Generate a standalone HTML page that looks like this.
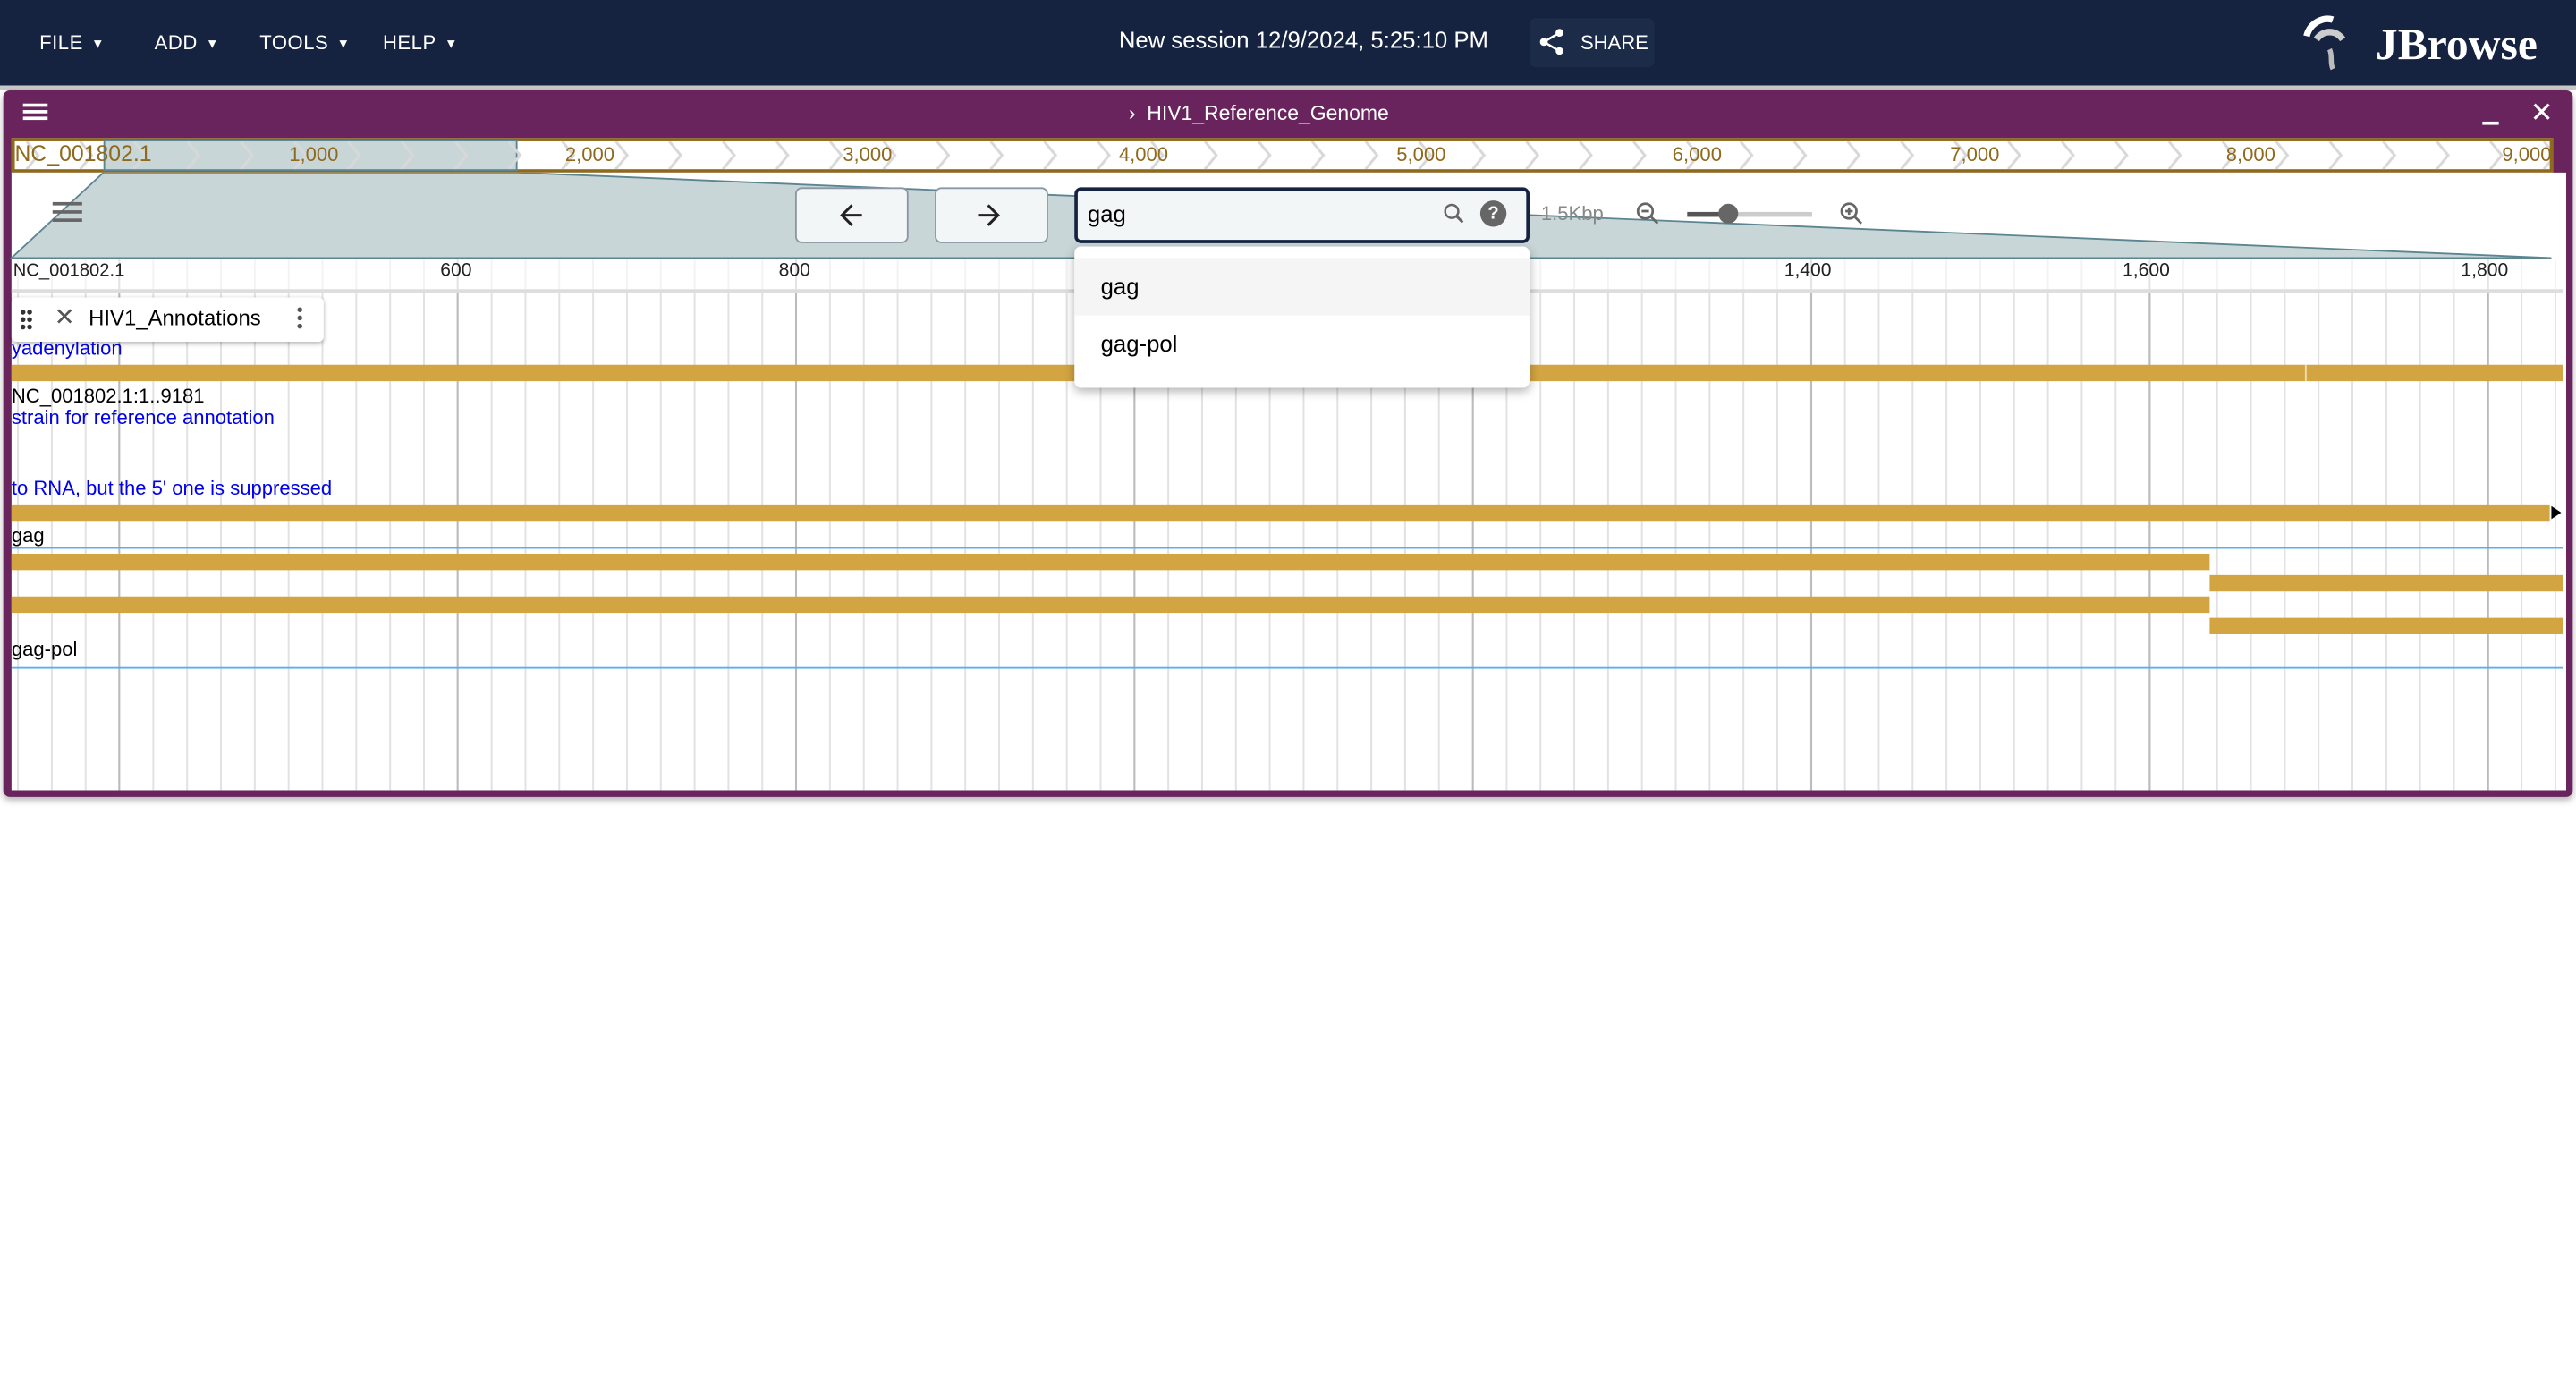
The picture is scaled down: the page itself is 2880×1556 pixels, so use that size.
<!DOCTYPE html>
<html><head><meta charset="utf-8"><style>
*{margin:0;padding:0;box-sizing:border-box}
html,body{width:2880px;height:1556px;overflow:hidden;background:#fff}
#w{position:absolute;left:0;top:0;width:1568px;height:847px;transform:scale(1.836735);transform-origin:0 0;font-family:"Liberation Sans",sans-serif;}
.a{position:absolute}
.top{left:0;top:0;width:1568px;height:52px;background:#152340;color:#fff}
.menu{top:19px;font-size:12px;letter-spacing:.3px}
.menu span{font-size:8px;margin-left:5px;vertical-align:1px}
.txt{white-space:nowrap}
.ov{font-size:12px;color:#8f6a1d;top:87px}
.rl{font-size:11.5px;color:#222;top:159px}
.bar{background:#d3a542;height:10px}
.bt{font-size:12px;white-space:nowrap}
.blue{color:#0000ee}
.btn{top:114px;width:69px;height:34px;border:1px solid #8a96a3;border-radius:4px;background:#f3f6f7}
</style></head><body><div id="w">
<div class="a top">
 <div class="a menu" style="left:24px">FILE<span>▼</span></div>
 <div class="a menu" style="left:94px">ADD<span>▼</span></div>
 <div class="a menu" style="left:158px">TOOLS<span>▼</span></div>
 <div class="a menu" style="left:233px">HELP<span>▼</span></div>
 <div class="a txt" style="left:681px;top:16px;font-size:14px">New session 12/9/2024, 5:25:10 PM</div>
 <div class="a" style="left:931px;top:11px;width:76px;height:30px;background:#1c2b48;border-radius:4px"></div>
 <svg class="a" style="left:935px;top:16px" width="19" height="19" viewBox="0 0 24 24"><path fill="#fff" d="M18 16.08c-.76 0-1.44.3-1.96.77L8.91 12.7c.05-.23.09-.46.09-.7s-.04-.47-.09-.7l7.05-4.11c.54.5 1.25.81 2.04.81 1.66 0 3-1.34 3-3s-1.34-3-3-3-3 1.34-3 3c0 .24.04.47.09.7L8.04 9.81C7.5 9.31 6.79 9 6 9c-1.66 0-3 1.34-3 3s1.34 3 3 3c.79 0 1.5-.31 2.04-.81l7.12 4.16c-.05.21-.08.43-.08.65 0 1.61 1.31 2.92 2.92 2.92s2.92-1.31 2.92-2.92-1.31-2.92-2.92-2.92z"/></svg>
 <div class="a" style="left:962px;top:19px;font-size:12px">SHARE</div>
 <svg class="a" style="left:1400px;top:8px" width="40" height="38" viewBox="0 0 40 38"><path d="M4 14 C6 6 14 2 20 4" stroke="#fff" stroke-width="4" fill="none"/><path d="M10 16 C14 10 22 10 26 16" stroke="#ccc" stroke-width="4" fill="none"/><path d="M18 22 C20 26 18 30 20 34" stroke="#bbb" stroke-width="3" fill="none"/></svg>
 <div class="a" style="left:1446px;top:12px;font-family:'Liberation Serif',serif;font-size:27px;font-weight:bold">JBrowse</div>
</div>
<div class="a" style="left:0;top:52px;width:1568px;height:3px;background:#c8c8c8"></div>
<div class="a" style="left:2px;top:55px;width:1564px;height:430px;background:#69245e;border-radius:4px;box-shadow:0 2px 4px rgba(0,0,0,.3)"></div>
<div class="a" style="left:14px;top:63px;width:15px;height:2px;background:#fff;box-shadow:0 4px 0 #fff,0 8px 0 #fff"></div>
<div class="a txt" style="left:687px;top:62px;color:#fff;font-size:12.5px">›&nbsp;&nbsp;HIV1_Reference_Genome</div>
<div class="a" style="left:1511px;top:74px;width:10px;height:2px;background:#fff"></div>
<div class="a" style="left:1540px;top:59px;color:#fff;font-size:17px">✕</div>
<!-- overview -->
<div class="a" style="left:7px;top:84px;width:1547px;height:21px;background:#fff;border:2px solid #8f6a1d"></div>
<div class="a" style="left:63px;top:85px;width:252px;height:19px;background:#c9d6d8;border:1px solid #5b8590"></div>
<svg class="a" style="left:9px;top:86px" width="1543" height="17"><defs><pattern id="ch" x="103" y="0" width="32.6" height="17" patternUnits="userSpaceOnUse"><polyline points="2,0 9,8.5 2,17" fill="none" stroke="#d8d8d8" stroke-width="1.6"/></pattern></defs><rect width="1543" height="17" fill="url(#ch)"/></svg>
<div class="a" style="left:9px;top:86px;font-size:13.5px;color:#8f6a1d">NC_001802.1</div>
<div class="a ov" style="left:176px">1,000</div><div class="a ov" style="left:344px">2,000</div><div class="a ov" style="left:513px">3,000</div><div class="a ov" style="left:681px">4,000</div><div class="a ov" style="left:850px">5,000</div><div class="a ov" style="left:1018px">6,000</div><div class="a ov" style="left:1187px">7,000</div><div class="a ov" style="left:1355px">8,000</div><div class="a ov" style="left:1523px;width:30px;overflow:hidden">9,000</div>
<!-- main white area -->
<div class="a" style="left:7px;top:105px;width:1555px;height:376px;background:#fff"></div>
<svg class="a" style="left:0;top:105px" width="1568" height="54"><polygon points="63,0 315,0 1553,52 7,52" fill="#c9d6d8" stroke="#5b8590" stroke-width="1"/></svg>
<div class="a" style="left:32px;top:123px;width:18px;height:2px;background:#666;box-shadow:0 5px 0 #666,0 10px 0 #666"></div>
<div class="a btn" style="left:484px"></div><div class="a btn" style="left:569px"></div>
<svg class="a" style="left:508px;top:121px" width="20" height="20" viewBox="0 0 24 24"><path d="M20 11H7.8l5.6-5.6L12 4l-8 8 8 8 1.4-1.4L7.8 13H20z" fill="#222"/></svg>
<svg class="a" style="left:592px;top:121px" width="20" height="20" viewBox="0 0 24 24"><path d="M4 11h12.2l-5.6-5.6L12 4l8 8-8 8-1.4-1.4 5.6-5.6H4z" fill="#222"/></svg>
<div class="a" style="left:654px;top:114px;width:277px;height:34px;border:2px solid #152340;border-radius:4px;background:#f3f6f7"></div>
<div class="a" style="left:662px;top:122px;font-size:14px">gag</div>
<svg class="a" style="left:877px;top:122px" width="16" height="16" viewBox="0 0 24 24"><circle cx="10" cy="10" r="6" fill="none" stroke="#666" stroke-width="2"/><path d="M14 14l6 6" stroke="#666" stroke-width="2.4"/></svg>
<div class="a" style="left:901px;top:122px;width:16px;height:16px;border-radius:50%;background:#666;color:#fff;font-size:11px;font-weight:bold;text-align:center;line-height:16px">?</div>
<div class="a" style="left:938px;top:123px;font-size:12px;color:#888">1.5Kbp</div>
<svg class="a" style="left:994px;top:121px" width="18" height="18" viewBox="0 0 24 24"><circle cx="10" cy="10" r="6" fill="none" stroke="#666" stroke-width="2"/><path d="M14 14l6 6M7 10h6" stroke="#666" stroke-width="2"/></svg>
<div class="a" style="left:1027px;top:129px;width:76px;height:3px;background:#ccc"></div>
<div class="a" style="left:1027px;top:129px;width:25px;height:3px;background:#555"></div>
<div class="a" style="left:1046px;top:124px;width:12px;height:12px;border-radius:50%;background:#666"></div>
<svg class="a" style="left:1118px;top:121px" width="18" height="18" viewBox="0 0 24 24"><circle cx="10" cy="10" r="6" fill="none" stroke="#666" stroke-width="2"/><path d="M14 14l6 6M7 10h6M10 7v6" stroke="#666" stroke-width="2"/></svg>
<!-- grid -->
<div class="a" style="left:7px;top:158px;width:1553px;height:323px;background:linear-gradient(to right,#bbb 0 1px,transparent 1px) 65px 0/206px 100% repeat-x,linear-gradient(to right,#e2e2e2 0 1px,transparent 1px) 3.4px 0/20.6px 100% repeat-x"></div>
<div class="a" style="left:7px;top:158px;width:1553px;height:20px;border-bottom:2px solid #ddd;background:rgba(255,255,255,.6)"></div>
<div class="a rl" style="left:8px;font-size:11px">NC_001802.1</div>
<div class="a rl" style="left:268px">600</div><div class="a rl" style="left:474px">800</div><div class="a rl" style="left:1086px">1,400</div><div class="a rl" style="left:1292px">1,600</div><div class="a rl" style="left:1498px">1,800</div>
<!-- features -->
<div class="a bt blue" style="left:7px;top:205px">yadenylation</div>
<div class="a bar" style="left:7px;top:222px;width:1553px"></div>
<div class="a" style="left:1403px;top:222px;width:1px;height:10px;background:#f0e0b0"></div>
<div class="a bt" style="left:7px;top:234px">NC_001802.1:1..9181</div>
<div class="a bt blue" style="left:7px;top:247px">strain for reference annotation</div>
<div class="a bt blue" style="left:7px;top:290px">to RNA, but the 5' one is suppressed</div>
<div class="a bar" style="left:7px;top:307px;width:1545px"></div>
<div class="a" style="left:1553px;top:308px;width:0;height:0;border-left:6px solid #000;border-top:4px solid transparent;border-bottom:4px solid transparent"></div>
<div class="a bt" style="left:7px;top:319px">gag</div>
<div class="a" style="left:7px;top:333px;width:1553px;height:1px;background:#55b0ee"></div>
<div class="a bar" style="left:7px;top:337px;width:1338px"></div>
<div class="a bar" style="left:1345px;top:350px;width:215px"></div>
<div class="a bar" style="left:7px;top:363px;width:1338px"></div>
<div class="a bar" style="left:1345px;top:376px;width:215px"></div>
<div class="a bt" style="left:7px;top:388px">gag-pol</div>
<div class="a" style="left:7px;top:406px;width:1553px;height:1px;background:#55b0ee"></div>
<!-- track label -->
<div class="a" style="left:7px;top:181px;width:190px;height:27px;background:#fff;border-radius:3px;box-shadow:0 1px 3px rgba(0,0,0,.3)"></div>
<svg class="a" style="left:12px;top:188px" width="8" height="13"><g fill="#333"><circle cx="2" cy="2" r="1.5"/><circle cx="6" cy="2" r="1.5"/><circle cx="2" cy="6.5" r="1.5"/><circle cx="6" cy="6.5" r="1.5"/><circle cx="2" cy="11" r="1.5"/><circle cx="6" cy="11" r="1.5"/></g></svg>
<div class="a" style="left:33px;top:184px;font-size:15px;color:#555">✕</div>
<div class="a bt" style="left:54px;top:186px;font-size:13px">HIV1_Annotations</div>
<div class="a" style="left:181px;top:187px;width:3px;height:3px;background:#555;border-radius:50%;box-shadow:0 5px 0 #555,0 10px 0 #555"></div>
<!-- dropdown -->
<div class="a" style="left:654px;top:150px;width:277px;height:86px;background:#fff;border-radius:4px;box-shadow:0 2px 6px rgba(0,0,0,.3)"></div>
<div class="a" style="left:654px;top:157px;width:277px;height:35px;background:#f5f5f5"></div>
<div class="a" style="left:670px;top:166px;font-size:14px">gag</div>
<div class="a" style="left:670px;top:201px;font-size:14px">gag-pol</div>
</div></body></html>
